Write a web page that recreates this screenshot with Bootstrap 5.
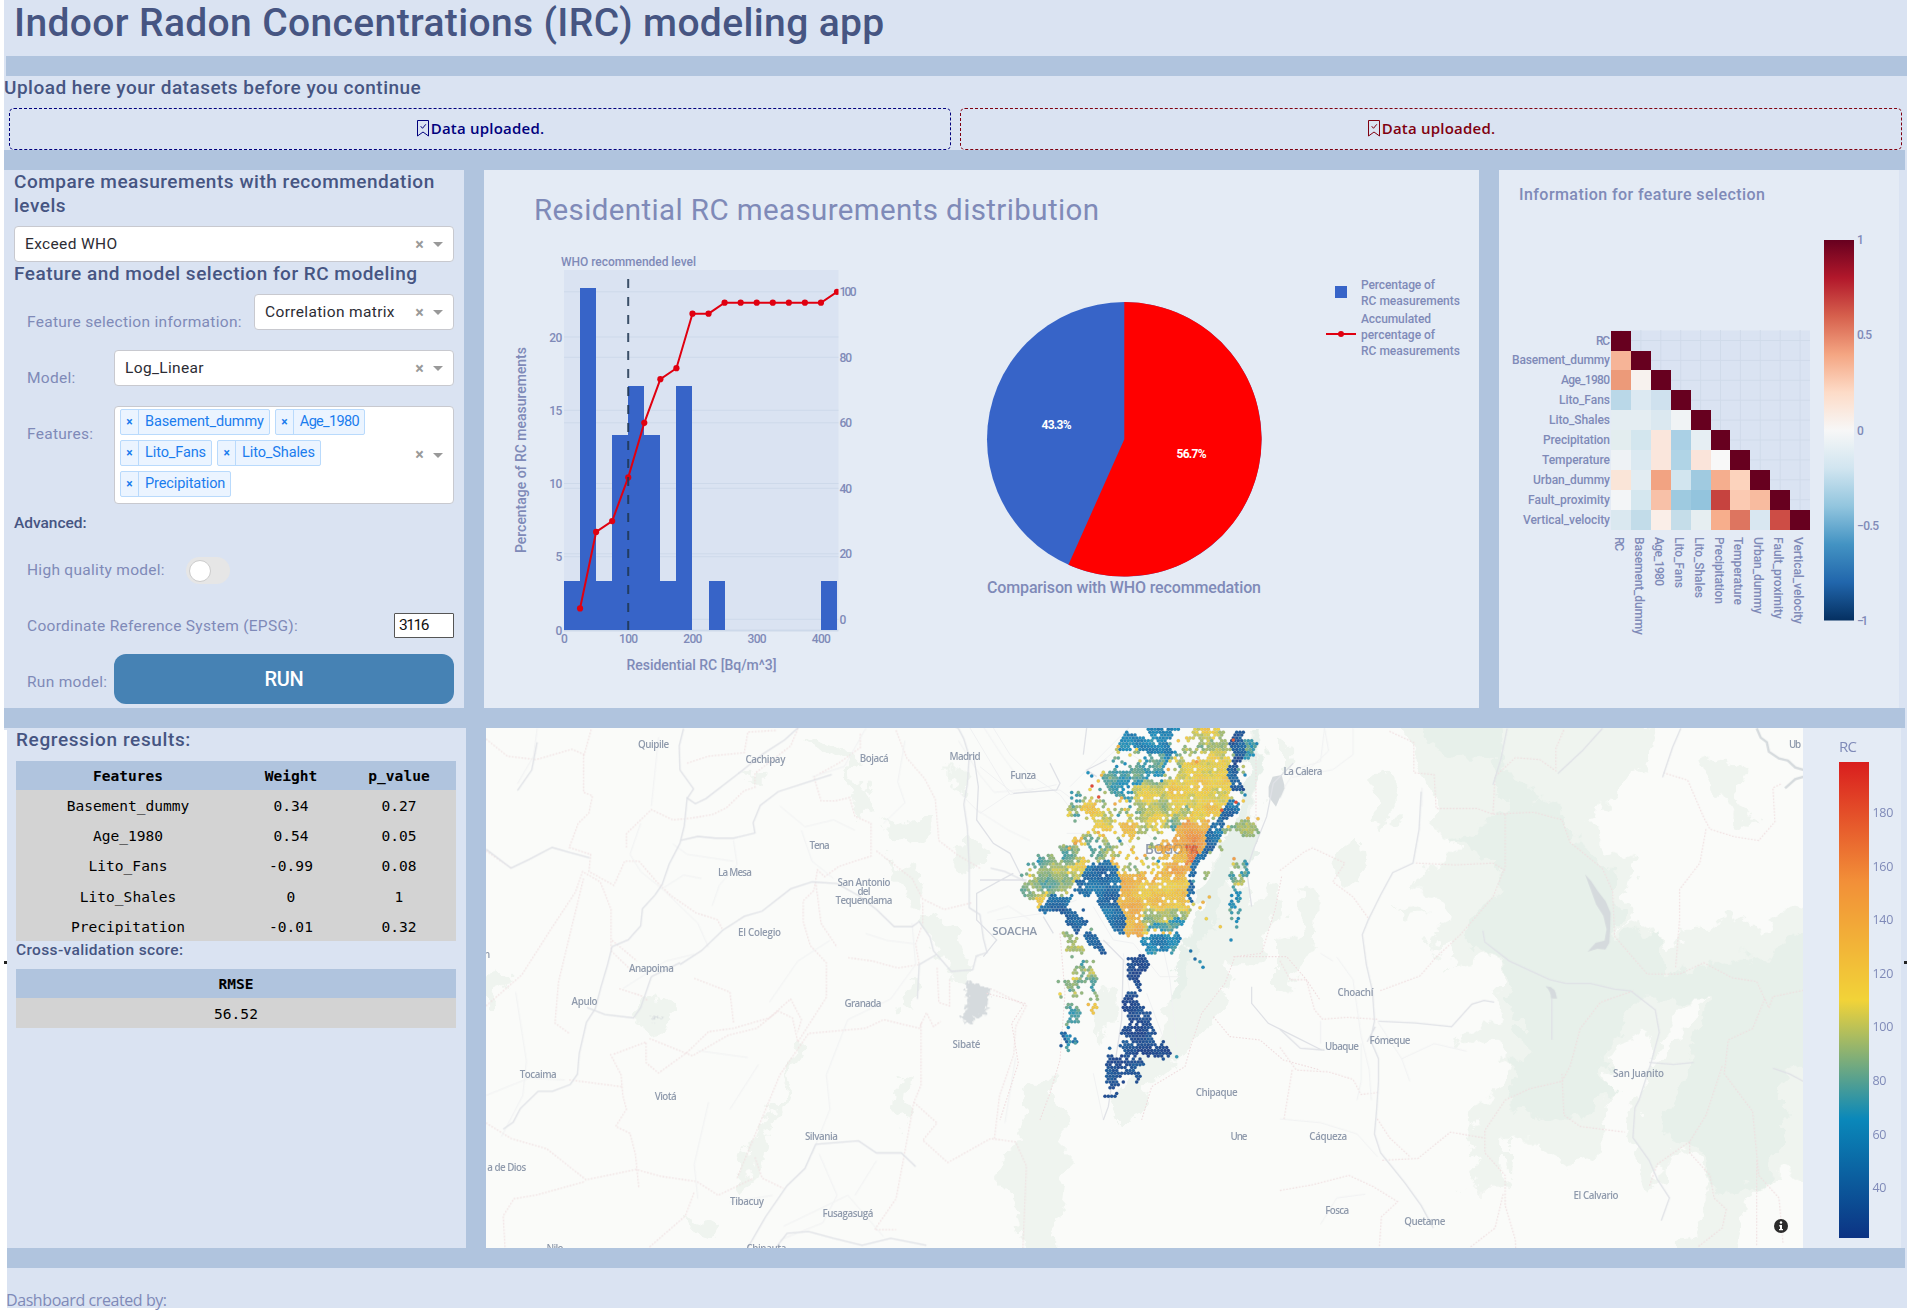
<!DOCTYPE html>
<html lang="en">
<head>
<meta charset="utf-8">
<title>Indoor Radon Concentrations (IRC) modeling app</title>
<link rel="stylesheet" href="https://cdn.jsdelivr.net/npm/bootstrap@5.3.0/dist/css/bootstrap.min.css">
<style>
:root{--panel:#dae3f2;--chart:#e4ebf5;--steel:#b0c4de;--ink:#465582;--soft:#7f8ab8}
body{background:#fff;font-family:Roboto,"Liberation Sans",sans-serif;color:var(--soft);width:1916px;height:1310px;overflow:hidden}
.shell{width:1903px;margin-left:4px;background:var(--panel);position:relative}
.band{background:var(--steel);height:20px}
.band.upper{width:1901px}
.band.lower{width:1901px}
.band.last{width:1898px;margin-left:3px}
.ttl{height:56px;padding:0 0 0 10px;font-size:39px;line-height:46px;font-weight:500;letter-spacing:.36px;color:var(--ink);white-space:nowrap;margin:0}
h2,h3{color:var(--ink);font-weight:500;margin:0;white-space:nowrap}
h2{font-size:19px;line-height:24px;letter-spacing:.53px}
h3{font-size:15.5px;letter-spacing:.35px}
.upload{height:74px}
.upload h2{height:32px;letter-spacing:.48px}
.zones{padding:0 5px 0 5px;gap:9px}
.drop{height:42px;border:1.5px dashed #00007d;border-radius:5px;color:#00007d;font:600 15px/38px "Open Sans",sans-serif;letter-spacing:.22px;flex:1;padding-bottom:2px}
.drop.red{border-color:#800010;color:#800010}
.split{width:20px;background:var(--steel)}
.upperrow{height:538px}
.lowerrow{height:520px;margin-left:3px}
.ctrl{width:460px;padding:0 10px 0 10px;background:var(--panel)}
.mid{width:995px;background:var(--chart)}
.side{width:400px;background:var(--chart)}
.dd{height:36px;background:#fff;border:1px solid #c8c9cf;border-radius:4px;color:#2c2c34;font-size:15.5px;letter-spacing:.35px;padding:1px 10px 0 10px;white-space:nowrap}
.dd.w200{width:200px}.dd.w340{width:340px}
.dd.multi{height:98px;padding-left:5px;padding-top:0}
.tags{gap:5px;padding-top:2px;width:270px}
.cl{color:#999;font-size:16px;font-weight:700;margin-right:9px;line-height:1}
.caret{border:5.500px solid transparent;border-top-color:#999;border-bottom:0;width:0;height:0}
.line56{height:56px}.line106{height:106px}.line41{height:41px}
.lab{font-size:15.5px;line-height:20px;letter-spacing:.29px;white-space:nowrap;padding:18px 0 0 13px}
.lab.hq{padding-top:3px;width:172px}
.lab.crs{padding-top:3px}
.tagx{height:26px;border:1px solid #b9dafc;background:#ebf4ff;color:#1a7cee;border-radius:2px;font-size:14.5px;line-height:24px;letter-spacing:-.1px}
.tagx i{font-style:normal;font-weight:700;width:18px;text-align:center;border-right:1px solid #b9dafc;font-size:12px}
.tagx span{padding:0 5px 0 6px}
.tagx .tight{letter-spacing:-.68px}
.sw{width:44px;height:27px;border-radius:14px;background:#e6e6e6;padding:2.5px}
.sw b{display:block;width:22px;height:22px;border-radius:50%;background:#fff;border:1px solid #ccc}
.epsg{width:60px;height:25px;border:1px solid #555;border-radius:1px;background:#fff;color:#111;font-size:15.5px;letter-spacing:-1.5px;line-height:22px;padding-left:4px}
.run,.run:hover{width:340px;height:50px;border-radius:12px;background:#4682b4;color:#fff;font-size:20px;font-weight:500;padding:0;border:0;line-height:48px;letter-spacing:-.3px}
.h-cmp{height:56px}.h-feat{height:32px}.h-feat.h-feat{letter-spacing:.49px}.h-adv.h-adv{height:45px;line-height:22px;letter-spacing:-.02px}
.res{width:459px;padding:0 10px 0 9px}
.res h2{height:33px;line-height:23px;letter-spacing:.62px}
.res h3{height:28px;line-height:18px}
.grid{font:14.55px/28px "DejaVu Sans Mono",monospace;color:#000;background:#d3d3d3;width:440px;text-align:center;table-layout:fixed}
.grid th{background:var(--steel);height:29px;padding:1px 0 0;font-weight:700;line-height:28px}
.grid td{height:30.2px;padding:2px 0 0}
.c1{width:224px}.c2{width:102px}
.foot{height:40px;font:16px/24px "Open Sans",sans-serif;padding:20px 0 0 2px;letter-spacing:-.42px;white-space:nowrap}
svg{display:block}
svg text{fill:var(--soft);font-family:Roboto,sans-serif;font-size:12.5px;font-weight:500}
.legend{background:var(--chart)}
.mapl text{font:600 9.8px "Open Sans",sans-serif;fill:#8f9aac;text-anchor:middle}
.bd{fill:none;stroke:#efdcde;stroke-width:1.1;stroke-dasharray:1.6 1.6}
.rd{fill:none;stroke:#dfe1e6;stroke-width:1.3}
.rm{fill:none;stroke:#f0f1f2;stroke-width:1}
.bd path,.rd path,.rm path{vector-effect:non-scaling-stroke}
.gn{fill:#eff4ef}.gd{fill:#e7f0ea}.wt{fill:#d5dadd}
.nub{position:absolute;width:3px;height:3px;background:#222;top:961px}
.edge{position:absolute;left:0;width:3px;background:#fff}
.edge.a{top:730px;height:231px}.edge.b{top:964px;height:344px}
</style>
</head>
<body>
<div class="shell">
  <h1 class="ttl">Indoor Radon Concentrations (IRC) modeling app</h1>
  <div class="band upper ms-auto"></div>
  <section class="upload d-flex flex-column">
    <h2>Upload here your datasets before you continue</h2>
    <div class="zones d-flex">
      <div class="drop d-flex justify-content-center align-items-center"><svg width="15" height="18" viewBox="0 0 15 18" fill="none" stroke="currentColor"><path d="M1.500 1.500h11v15.500l-5.500-4L1.500 17zM4.700 7.200l1.800 2.100 3.300-4"/></svg><span>Data uploaded.</span></div>
      <div class="drop red d-flex justify-content-center align-items-center"><svg width="15" height="18" viewBox="0 0 15 18" fill="none" stroke="currentColor"><path d="M1.500 1.500h11v15.500l-5.500-4L1.500 17zM4.700 7.200l1.800 2.100 3.300-4"/></svg><span>Data uploaded.</span></div>
    </div>
  </section>
  <div class="band upper"></div>

  <div class="upperrow d-flex">
    <aside class="ctrl d-flex flex-column">
      <h2 class="h-cmp">Compare measurements with recommendation<br>levels</h2>
      <div class="dd d-flex align-items-center"><span class="me-auto">Exceed WHO</span><span class="cl">×</span><span class="caret"></span></div>
      <h2 class="h-feat">Feature and model selection for RC modeling</h2>
      <div class="line56 d-flex justify-content-between"><span class="lab">Feature selection information:</span><div class="dd w200 d-flex align-items-center"><span class="me-auto">Correlation matrix</span><span class="cl">×</span><span class="caret"></span></div></div>
      <div class="line56 d-flex justify-content-between"><span class="lab">Model:</span><div class="dd w340 d-flex align-items-center"><span class="me-auto">Log_Linear</span><span class="cl">×</span><span class="caret"></span></div></div>
      <div class="line106 d-flex justify-content-between"><span class="lab">Features:</span>
        <div class="dd w340 multi d-flex align-items-center">
          <div class="tags d-flex flex-wrap me-auto align-self-start">
            <div class="tagx d-flex"><i>×</i><span>Basement_dummy</span></div><div class="tagx d-flex"><i>×</i><span class="tight">Age_1980</span></div>
            <div class="tagx d-flex"><i>×</i><span>Lito_Fans</span></div><div class="tagx d-flex"><i>×</i><span>Lito_Shales</span></div>
            <div class="tagx d-flex"><i>×</i><span>Precipitation</span></div>
          </div>
          <span class="cl">×</span><span class="caret"></span>
        </div></div>
      <h3 class="h-adv">Advanced:</h3>
      <div class="line56 d-flex"><span class="lab hq">High quality model:</span><div class="sw"><b></b></div></div>
      <div class="line41 d-flex justify-content-between"><span class="lab crs">Coordinate Reference System (EPSG):</span><div class="epsg">3116</div></div>
      <div class="d-flex justify-content-between"><span class="lab">Run model:</span><button class="btn run">RUN</button></div>
    </aside>
    <div class="split"></div>
    <section class="mid"><svg id="dist" width="995" height="538" viewBox="484 170 995 538"></svg></section>
    <div class="split"></div>
    <section class="side"><svg id="corr" width="400" height="538" viewBox="1499 170 400 538"></svg></section>
  </div>
  <div class="band lower"></div>

  <div class="lowerrow d-flex">
    <section class="res">
      <h2>Regression results:</h2>
      <table class="grid"><colgroup><col class="c1"><col class="c2"><col></colgroup>
        <tr><th>Features</th><th>Weight</th><th>p_value</th></tr>
        <tr><td>Basement_dummy</td><td>0.34</td><td>0.27</td></tr>
        <tr><td>Age_1980</td><td>0.54</td><td>0.05</td></tr>
        <tr><td>Lito_Fans</td><td>-0.99</td><td>0.08</td></tr>
        <tr><td>Lito_Shales</td><td>0</td><td>1</td></tr>
        <tr><td>Precipitation</td><td>-0.01</td><td>0.32</td></tr></table>
      <h3>Cross-validation score:</h3>
      <table class="grid"><tr><th>RMSE</th></tr><tr><td>56.52</td></tr></table>
    </section>
    <div class="split"></div>
    <svg id="map" width="1317" height="520" viewBox="0 0 1317 520">
      <filter id="rough" x="-5%" y="-5%" width="110%" height="110%"><feTurbulence type="fractalNoise" baseFrequency=".045" numOctaves="4" seed="5"/><feDisplacementMap in="SourceGraphic" scale="34" xChannelSelector="R" yChannelSelector="G"/></filter>
      <filter id="wiggle" x="-5%" y="-5%" width="110%" height="110%"><feTurbulence type="fractalNoise" baseFrequency=".09" numOctaves="3" seed="9"/><feDisplacementMap in="SourceGraphic" scale="28" xChannelSelector="R" yChannelSelector="G"/></filter>
      <rect width="1317" height="520" fill="#fafbf9"/>
      <!-- vegetation, three sheets -->
      <g filter="url(#rough)">
        <g transform="translate(-6,-8) scale(.3571,.3444)" class="gn"><path d="M905 50l60-5 50 40 30 30 10 60 40 60 10 30-40 5-20-80-20-60-60-40zM1120 280l50 30 40-10 60-40 0 60-30 30-60 10-40-40zM1320 140l50 5 10 40-30 25-30-20zM1330 360l60-10 15 70-20 25-60-15zM1140 400l60 20 40 80-10 40-50-20zM1240 560l60 20 50 30 30 80-10 50-60-5-60-90zM17 750l30-20 35 35-30 50-35 15zM480 800l55 30-10 60-50 10-60-30zM740 155l60-5-10 35-50 0zM1190 770l35 20-15 55-30-10zM1180 1035l35-10-10 90-15 60-30-10zM895 940l10 30-50 90-40 120-50 130-45 70-10-40 100-200zM570 1435l70 25 35 20-15 30-40-10z"/><path d="M1535 1080l45 10 60 80 0 150-30 230-90 10-20-160-60-60 40-90 30-40z"/></g>
        <g transform="translate(474,-8) scale(.3333)"><g class="gn"><path d="M855 24L900 24L905 150L900 290L840 350L800 470L880 560L940 500L960 560L935 640L900 710L820 720L795 800L780 870L720 920L660 1010L600 1060L560 1110L530 1200L460 1200L500 1060L600 960L650 740L700 600L760 400L840 300L870 180zM200 1130L290 1040L285 1110L250 1200L180 1200zM410 800L470 820L460 930L420 960zM0 140L30 160L10 240L0 240zM0 340L30 340L50 430L0 450z"/></g><path class="gd" d="M870 24L895 24L905 204L875 294L885 400L800 480L770 590L760 640L690 720L680 850L620 860L650 740L690 640L730 500L800 350L860 200z"/></g>
        <g transform="translate(794,-8) scale(.4057,.3763)">
        <path class="gn" d="M270 -30L330 90L340 140L380 240L370 300L440 320L430 370L340 400L330 450L400 470L420 520L370 570L380 620L430 590L410 680L500 620L540 660L545 780L520 800L440 830L450 870L540 860L560 920L540 980L490 1030L470 1110L500 1190L450 1250L555 1250L560 1130L620 1120L680 1180L800 1160L790 1040L820 980L800 900L900 820L930 880L1000 760L1080 690L1040 760L960 880L900 960L860 1100L900 1250L1000 1140L1060 1230L980 1430L1130 1430L1160 1260L1230 1200L1340 1250L1340 450L1190 560L1120 510L1060 560L990 560L960 630L900 540L840 560L880 370L810 330L760 280L790 230L900 130L915 60L890 -30zM230 210L250 130L290 160L290 250L260 300L225 280zM1040 110L1110 90L1150 140L1130 220L1180 280L1130 270L1060 180zM150 330L190 320L200 440L150 430L130 390zM50 450L90 440L90 540L100 600L60 640L30 720L0 720L0 590L60 570zM280 500L330 490L370 520L300 530zM0 50L15 50L25 120L0 145z"/>
        <path class="gd" d="M340 -30L550 -30L540 110L620 190L700 250L700 300L790 380L825 440L830 580L920 550L930 620L960 680L1100 640L1230 610L1340 530L1340 920L1240 940L1250 1120L1180 1240L1080 1260L1010 1120L940 1090L1010 900L1060 740L950 740L880 740L830 850L780 900L820 970L750 1050L700 1060L560 1020L580 950L560 900L610 870L570 740L540 650L470 590L480 510L550 420L550 380L430 320L500 270L560 230L540 120L400 100z"/>
        </g>
      </g>
      <!-- western roads, rivers and limits -->
      <g transform="translate(-6,-8) scale(.3571,.3444)">
        <g class="wt" filter="url(#wiggle)"><path d="M1360 755l70 25-15 75-30 10-5 15-35-5 20-50zM480 862l40 0 0 5-35 3-5 10z"/></g>
        <g class="bd"><path d="M17 55l60 50 80 10 100-30 35 15 20-75M290 100v110l25 10-10 50-30 30-25 70 60 20-5 50 70 40 30-70 40 0 50 60 40 40 70 50 60 20 15 30M410 370l0-40 30-30 40-40 60 30 50-5 60-10 40-20 50-50 30-10 0-40 100-80 20-50M580 125l60-20 100-10 10-60 80-5M1065 40l0 40-60 45-70 40 20 70 40 0 40-10 15 55 45 20 0 95-90 30-40 30-20-20-10 60-30 30 0 60 20 70 45 50 0 100-80 130-15-70-40-20-60 50-80 20-100 60-120-50M1165 30l30 80 50 60 30 60 10 120 50 40 65 40M1110 380l100 80 30 60 60 30 80-20M1240 530l0 60-20 60 10 60-60 10-70-20-70-10M940 470l15 120 45 70M17 380l70 50M17 830l100-90 80-130 70-110 20-60 50 30 30 80 0 120 60 60M290 460l-40 170-30 130-10 120 40 30M370 640l70 60M390 780l60 20 20 15M600 750l100 40 10 90M375 970l90-35 0 60 35 30 80-60 60-60 70-10 100-30 60-55 30 60-10 35M365 970l30 60 5 60 10 40-30 50 40 20 15 60 10 100M17 1170l70 45 100 30 110 90 140-30 70 20 100 15 60 40 100-50M250 1045l150 20M70 1530l-5-90 30-50 60-10 140-40M475 1530l100-90 25-70M720 1330l120-300 80-120 160-15 50-25 100 25 20-45 20 40 20-15M1235 880l0 180-20 50-30 170-20 110-60 90 60 0M1215 1110l65 60-40 50 70 65 120-70 70 10 30 70-10 250M1280 720l5 100 30 10 0-80M1430 780l100 50-30 60-5 80-40 120-15 130M770 1270l20 60 60 30"/></g>
        <g class="rm"><path d="M160 25l-10 80-45 80M450 300l-30 90 30 50 60 50 60-40 50 10M540 360l40 30 130 20M710 350l10 70-50 60-20 60M900 320l30 90 60 50M840 250l70 60 80-20 60 30M400 780l120-80 80-20M980 640l-90 60-80 120M1080 25l-60 110-90 30M1190 60l-20 120 20 60-60 60M1340 60l60 100 40 50 110-10M1390 260l90 60 60 30M1410 20l50 80 70 100M1080 620l60 20 80 10M1210 590l10 120-70 100-120 60-60 160 10 100-50 130M610 960l140 20M780 1000l-80 130M640 1110l-40 180 10 100M510 490l100 100 30 70M100 790l30 200-10 100-60 120M17 1090l120-50 100 5M700 1400l120-20M950 1260l50 120-40 80-120 50M1050 1380l60-100M850 1470l180-90 100 120M1500 980l-30 190M1420 560l60-20 60 40M480 250l20-200"/></g>
        <g class="rd"><path d="M570 25l-12 50 2 70 38 55-18 28-8 80-12 50-30 60-20 60-20 30-35 40-5 50-35 40-45 20-12 50-20 70-15 60-25 40-20 90-5 60-20 30-50 20-40 0-50 50-20 40-28 20M578 225l25 18 30-15 100-80 60-50 60-40 80-75M560 350l50-12 50 5 50 0 60-15-5-30 20-50 50-40 90-30 60-20M17 375l70 55 50-25 65-35 50 15 55 15M560 710l60-40 60-60 60-40 50-15 80-65 60-20 70 5 60 35 50 40 50 50 50 0 20-15 30 45 10 40 50 60 60-5 10-40 30-10-10-40-10-70-30-20 0-120-5-110-10-70 10-60 5-80-15-50-15-30-50-30M300 835l50 20 80 10 20-30 30-90 80-40M750 1532l50-90 60-90 50-50 30-70 120-10 50 35 70 0 40 40M830 1530l30-40 60-5 70 20 80 20 80-20 100 20M1280 680l-50 30-5 100M1430 430l40 10 60 30M105 205l40-60 15-80"/></g>
      </g>
      <!-- eastern highlands -->
      <g transform="translate(794,-8) scale(.4057,.3763)">
        <g class="wt"><path d="M752 410l15 18 16 26 20 28 12 30-1 40-2 40-10 18-20-2-24 8 20-24 22-6 5-30-8-36-18-30-12-36zM655 708q24-2 28 32l-15 0q0-20-13-32zM0 150l12 30-12 30z"/></g>
        <g class="bd"><path d="M270 30l60 30 0 80 50 5 5 90 100 0 40 15 100-5 70 20 20 60 80 70 25 60 5 120 40 50 40 50 80 0 60-30 70 40 60 10 30 70 10-30 90-20M555 250v140l-30 80-80 100-60 60-40 50-100 40M335 380l100 5 90-5 30 20M525 250l5-100 50-50 60 5 40 30 0-60 20-50M0 400l60-50 20-10 80 40-30 50 50 40 40 60M0 640l25 50 40 0 20 80 20 25 60-5 75 5M945 140l60 20 40 100 15 30 60 20 60 10 40-50-5-90 20-10M1050 290l-15 90-50 70 0 80-10 130M870 720l-80 30-50 70-25 100-20 40-80 20-60 30-50 80 0 60 50 60 0 80 25 90 5 110M695 940l5 110 40 30 110 15M1195 740l-30 80-60 30-10 90 70 100 15 170 50 60 10 120M1090 920l-40 130-40 70 0 30 50 60 10 60 30 30-10 50-60 50M1010 1120l-80 60-20 60M500 1110l-80-15-80 70-90 5M0 870l40 60 80 5 60 20 20 40 40-5M0 1250l80-15 90-25 60 30 60 40-40 40-5 80M550 1260l-20 90-60 50M240 1060l30 50 50 50M10 1060l20-130M1175 1170l0 230"/></g>
        <g class="rm"><path d="M110 22l10 60-60 60M180 22l0 70-50 40-100 20M350 180l0 50M140 630l40 60 20 150 20 90 5 80M0 1060l100 10 90 30 50 60M200 860l0 100-10 50M130 640l-30-20M240 800l60 100 20 60M300 900l80-40 80 20M10 180l30-50 60-20 10-90M100 1340l40-70 70-10M100 800l0 60"/></g>
        <g class="rd"><path d="M348 190l-5 100-15 90-50 25-30 60-30 65-15 40 10 80 15 70 5 80-10 50 20 50 0 60-5 80-5 60 15 50 60 80 40 60 30 60M243 800l90 5 90 10 50-60 30-10 25 5M500 560l5 30 60 50 40 20 60 30 40 10 60 0 60 15 40 5 60 50 10 60-10 40-10 40-30 100-10 20-5 80 40 60 20 50 30 50-20 60M910 910l60 5 50-5M560 22l-15 80-20 70M795 22l-50 60-60 60M988 22l-20 50-25 80M0 822l50 50 60 5M215 855l20-40M1215 925l40 15 35 20M670 740l0 110"/></g>
        <path d="M1175 22l10 25 15 12 5 25 25 18 22 6 18 18 25 8v15l-25 8-25 24" fill="none" stroke="#d5dadd" stroke-width="6"/>
      </g>
      <!-- Bogotá and surroundings -->
      <g transform="translate(474,-8) scale(.3333)">
        <g class="wt"><path d="M965 165l8 30-8 25-17 40-22-30 0-30 12-30z"/></g>
        <g class="bd"><path d="M888 100l0 190 0 50M965 470l-20 100-40 130-80 10-30 80-70 90-30 90-20 70-100 60-30 100M820 710l160 0 60 70 40 60M760 890l50 60 90 10 70 60 110 30M300 640l15 180-15 200-30 100-30 80M80 820l115 30-40 60 20 120-55 170"/></g>
        <g class="rm"><path d="M30 24l60 100 60 100 140-30M100 24l50 80 60 60 90 60 60 80M300 210l80 60 60 30 60 70 40 50M60 140l100 80 140-10M0 220l60 60 90-60M330 200l60-60 60-60 60-60M540 120l-60-40-60 50M400 560l60 100 60 10 80 100 60 0M490 700l20 120M600 560l60 100M320 340l60 0M560 340l80 80-60 80M600 640l30 140 20 200M400 1060l30 140M110 600l140-20 100-40M350 640l100 30M560 820l60 160"/></g>
        <g class="rd"><path d="M40 100l15 100-5 100 50 70 50 30 40 80M60 480l40 0 100 0M160 220l130-10 10-20-30-60M380 24l-10 80M410 170l-30-20 60-30M160 460l-110 60 0 80 60 60-40 50M430 660l60 60-5 180-40 260-15 40M1000 130l-60 60-20 100-40 100-20 60 15 110M875 800l0 50 50 60 80 40 80 40M250 590l30 50"/></g>
      </g>
      <g class="mapl" id="labels"></g>
      <g id="dots"></g>
      <circle cx="1295" cy="498" r="7" fill="#2b2b2b"/><path d="M1293.300 497h2.700v4h1v1.200h-4v-1.200h1v-2.600h-.700z" fill="#fff"/><circle cx="1295" cy="494.500" r="1.200" fill="#fff"/>
    </svg>
    <svg class="legend" width="98" height="520" viewBox="1803 728 98 520">
      <defs><linearGradient id="pt" x1="0" y1="1" x2="0" y2="0"><stop offset="0" stop-color="#0c3383"/><stop offset=".25" stop-color="#0a88ba"/><stop offset=".5" stop-color="#f2d338"/><stop offset=".75" stop-color="#f28f38"/><stop offset="1" stop-color="#d91e1e"/></linearGradient></defs>
      <rect x="1839" y="762" width="30" height="476" fill="url(#pt)"/><g id="pticks"></g>
    </svg>
  </div>
  <div class="band last"></div>
  <footer class="foot">Dashboard created by:</footer>
  <span class="nub start-0"></span><span class="nub end-0"></span>
  <div class="edge a"></div><div class="edge b"></div>
</div>
<script src="https://cdn.jsdelivr.net/npm/bootstrap@5.3.0/dist/js/bootstrap.bundle.min.js"></script>
<script>
// text helper: width w fixes the advance of the label
const T=(x,y,s,w,o='')=>`<text x="${x}" y="${y}" ${w?`textLength="${w}"`:''} ${o}>${s}</text>`;

// histogram, cumulative curve and pie
(()=>{
 let h=T(534,219.5,'Residential RC measurements distribution',565,'style="font-size:29.5px;font-weight:400"')+T(561,266,'WHO recommended level',135,'style="font-size:12px"');
 h+='<rect x="564" y="270" width="274.500" height="360" fill="#dae3f2"/>';
 const L=v=>630-14.65*v,R=v=>619.3-3.275*v;
 [5,10,15,20].forEach(v=>h+=`<path d="M564 ${L(v)}h274.500" stroke="#cdd9ea"/>`);
 [0,20,40,60,80,100].forEach(v=>h+=`<path d="M564 ${R(v)}h274.500" stroke="#cdd9ea"/>`);
 h+='<path d="M564 630.500h274.500" stroke="#cdd9ea" stroke-width="2"/>';
 [3.333,23.333,3.333,13.333,16.667,13.333,3.333,16.667,0,3.333,0,0,0,0,0,0,3.333].forEach((v,i)=>{if(v)h+=`<rect x="${Math.round(564+16.06*i)}" y="${Math.round(L(v))}" width="${Math.round(580.06+16.06*i)-Math.round(564+16.06*i)}" height="${630-Math.round(L(v))}" fill="#3764c8"/>`});
 const c=[3.33,26.67,30,43.33,60,73.33,76.67,93.33,93.33,96.67,96.67,96.67,96.67,96.67,96.67,96.67,100].map((v,i)=>[580.06+16.06*i,R(v)]);
 h+=`<clipPath id="pc"><rect x="564" y="270" width="274.500" height="361"/></clipPath><g clip-path="url(#pc)"><path d="M${c.join('L')}" fill="none" stroke="#e00010" stroke-width="2"/>`+c.map(p=>`<circle cx="${p[0]}" cy="${p[1]}" r="3.100" fill="#e00010"/>`).join('')+'</g>';
 h+='<path d="M628.200 630V279" stroke="#1f3550" stroke-opacity=".85" stroke-width="2" stroke-dasharray="9 9"/>';
 [0,5,10,15,20].forEach(v=>h+=T(562,L(v)+4.5,v,0,'style="text-anchor:end;font-size:12px;letter-spacing:-.4px"'));
 [0,20,40,60,80,100].forEach(v=>h+=T(839.5,R(v)+4.5,v,[0,12.5,17][String(v).length-1],'style="font-size:12px"'));
 [0,100,200,300,400].forEach(v=>h+=T(564+.6425*v,643,v,0,'style="text-anchor:middle;font-size:12px;letter-spacing:-.6px"'));
 h+=T(626.5,670,'Residential RC [Bq/m^3]',150,'style="font-size:14px"')+`<g transform="translate(525.500,553) rotate(-90)">${T(0,0,'Percentage of RC measurements',206,'style="font-size:14px"')}</g>`;
 const cx=1124.3,cy=439.3,r=137.3,a=2*Math.PI*.5667,ex=cx+r*Math.sin(a),ey=cy-r*Math.cos(a);
 h+=`<circle cx="${cx}" cy="${cy}" r="${r}" fill="#3764c8"/><path d="M${cx} ${cy}V${cy-r}A${r} ${r} 0 1 1 ${ex} ${ey}z" fill="#f00"/>`;
 h+=T(1041.5,429,'43.3%',30,'style="fill:#fff;font-weight:700;font-size:12px"')+T(1176.5,458,'56.7%',30,'style="fill:#fff;font-weight:700;font-size:12px"');
 h+=T(987,593,'Comparison with WHO recommedation',274,'style="font-size:16px"');
 h+='<rect x="1335" y="286" width="12" height="12" fill="#3764c8"/><path d="M1326 334h30" stroke="#e00010" stroke-width="2"/><circle cx="1341" cy="334" r="3" fill="#e00010"/>';
 const s='style="font-size:12px"';
 h+=T(1361,289,'Percentage of',74,s)+T(1361,305,'RC measurements',99,s)+T(1361,323,'Accumulated',70,s)+T(1361,339,'percentage of',74,s)+T(1361,355,'RC measurements',99,s);
 dist.innerHTML=h;
})();

// correlation matrix
(()=>{
 const n=['RC','Basement_dummy','Age_1980','Lito_Fans','Lito_Shales','Precipitation','Temperature','Urban_dummy','Fault_proximity','Vertical_velocity'],
 w=[14,98,49,51,61,67,68,77,82,87],
 m=['','#f6b497','#ec9a79 #f7f2ee','#bad8e8 #dce9f2 #cfe1ee','#e4edf2 #e4edf2 #dbe8f0 #f0f3f5','#e3edef #d3e6ee #fae6dc #aad0e5 #e6eef3','#eef2f5 #dbe9f1 #fae6dc #b0d4e6 #fae4da #f8f8f8','#fae5d8 #e2ecf2 #f2a382 #d2e5ef #a0cae0 #f5ae8e #fcd3bd','#f3f5f7 #d5e7ef #f8c1a8 #9ecae0 #93c4dd #c6433f #fbcab2 #f8bb9f','#dae8f0 #c2dce9 #faeee8 #c5dde9 #e6eef1 #f7ae8c #dd7560 #d9e7f1 #cd4d45'];
 let h=T(1519,200,'Information for feature selection',246,'style="font-size:16px"')+'<rect x="1611" y="330.500" width="199" height="199" fill="#dae3f2"/>';
 for(let i=0;i<10;i++)h+=`<path d="M${1621+19.9*i} 330v199M1611 ${340.5+19.9*i}h199" stroke="#d0dbea"/>`;
 for(let r=0;r<10;r++){const c=(m[r]?m[r].split(' '):[]).concat('#67001f');c.forEach((f,k)=>{const x=Math.round(1611+19.9*k),y=Math.round(330.6+19.9*r);h+=`<rect x="${x}" y="${y}" width="${Math.round(1630.9+19.9*k)-x}" height="${Math.round(350.5+19.9*r)-y}" fill="${f}"/>`});
  h+=T(1610-w[r],344.5+19.9*r,n[r],w[r],'style="font-size:12px"');
  h+=`<g transform="translate(${1615+19.9*r},537) rotate(90)">${T(0,0,n[r],w[r],'style="font-size:12px"')}</g>`}
 const s=['#67001f','#b2182b','#d6604d','#f4a582','#fddbc7','#f7f7f7','#d1e5f0','#92c5de','#4393c3','#2166ac','#053061'];
 h+='<linearGradient id="rb" x1="0" y1="0" x2="0" y2="1">'+s.map((c,i)=>`<stop offset="${i/10}" stop-color="${c}"/>`).join('')+'</linearGradient><rect x="1824" y="240" width="30" height="380.500" fill="url(#rb)"/>';
 [['1',244,0],['0.5',339,15],['0',434.5,0],['−0.5',530,22],['−1',625,11]].forEach(t=>h+=T(1857,t[1],t[0],t[2],'style="font-size:12px"'));
 corr.innerHTML=h;
})();

// place names on the map: name, x, y, width
labels.innerHTML=[['Quipile',167.6,16.8,31],['Cachipay',279.4,30.9,40],['Bojacá',388.3,29.9,29],['Madrid',479,28.2,31],['Funza',537.3,47.7,26],['Tena',333.6,117.7,20],['La Mesa',249,144.2,34],['San Antonio',378,154,53],['del',378,163.5,13],['Tequendama',378,172.6,57],['El Colegio',273.6,204,43],['Anapoima',165.4,240.6,45],['Apulo',98.6,273.7,26],['Granada',377,275,37],['Sibaté',480.4,316.7,28],['Tocaima',52.2,346,37],['Viotá',179.7,368,22],['Silvania',335.4,408.7,33],['a de Dios',20.8,439,39],['Tibacuy',261,473,34],['Fusagasugá',362,485.8,51],['Nilo',69,520.6,17],['Chinauta',280.4,520,40],['La Calera',817,43.6,39],['Choachí',869.5,264,36],['Ubaque',856,318,34],['Fómeque',904,312,41],['Cáqueza',842.3,408,38],['Fosca',851.2,482,24],['Quetame',938.8,493,41],['San Juanito',1152.6,345,51],['El Calvario',1110,467,45],['Chipaque',730.7,364.7,42],['Une',753,408.5,17],['Ub',1309,16,12],['C',1320,75,8],['n',1,226,6]].map(l=>T(l[1],l[2]+3.6,l[0],l[3])).join('')
 +T(528.7,206.7,'SOACHA',45,'style="font-size:11.500px;font-weight:600"')+T(686,125.5,'BOGOTÁ',54,'style="font-size:13.500px;font-weight:600"');

// measured cells: polygon, RC value, fill share, spread
(()=>{
 const Z=[
 ['480,60 720,60 870,60 840,300 700,460 700,560 640,640 500,640 480,460 390,430 330,370 390,330 330,310 330,220 420,180',104,.24,34],
 ['200,450 240,410 330,370 400,420 330,520 210,545',88,.3,20],
 ['500,35 480,60 470,95 520,85 600,115 590,165 615,175 630,100 635,60 660,24 560,24 570,55',58,.95,10],
 ['540,85 610,110 600,165 560,130',80,.65,14],
 ['490,120 420,180 450,222 490,230 510,265 520,200 560,190 620,180 600,120 560,130',73,.7,14],
 ['430,175 490,165 520,205 480,225',72,.92,10],
 ['520,200 560,185 620,180 640,200 620,260 640,330 570,325 540,345 525,300 540,270 520,240',102,.93,14],
 ['630,200 650,150 710,120 780,100 820,130 812,250 760,290 650,315 620,260',112,.94,12],
 ['670,255 700,260 695,290 640,335 620,310',88,.9,14],
 ['710,24 790,24 790,60 830,90 770,110 720,100 680,55',104,.75,18],
 ['740,55 780,60 820,90 780,110 745,90',92,.88,14],
 ['665,90 720,90 660,150 640,170',92,.4,18],
 ['822,24 855,40 850,70 880,95 838,130 828,180 858,215 812,205 800,170 820,110 812,70',35,.96,12],
 ['850,60 890,70 885,110 855,130',65,.65,18],
 ['818,235 832,245 832,275 800,310 778,355 748,395 697,470 686,465 722,380 745,335 775,280 805,255',45,.95,12],
 ['650,315 740,295 750,325 735,365 715,405 695,445 650,440 660,400 630,370',142,.95,14],
 ['680,375 712,380 705,420 680,430',170,.94,14],
 ['570,370 660,380 655,430 600,415',132,.6,14],
 ['575,430 660,420 690,450 680,500 570,500 590,460',128,.7,18],
 ['372,225 420,270 480,260 472,320 410,335 380,280',110,.87,14],
 ['480,305 530,310 525,355 485,355',120,.85,10],
 ['530,290 572,330 555,352 528,335',98,.85,10],
 ['330,210 400,230 360,270 355,300 325,305',85,.5,24],
 ['440,255 500,265 520,300 470,300',90,.45,24],
 ['380,335 470,365 480,400 420,430 390,400 370,350',88,.55,18],
 ['305,375 350,370 345,420 385,420 380,450 345,490 300,520 240,540 203,548 180,505 230,465 240,410 280,405 310,440',89,.92,12],
 ['322,440 385,415 375,450 338,500',108,.9,12],['215,535 270,515 240,565',110,.9,10],
 ['440,425 560,400 560,460 480,460',118,.42,28],
 ['240,572 270,525 340,530 345,480 370,450 400,430 440,425 478,450 482,560 505,610 495,642 450,625 430,580 400,525 350,520 300,578',45,.96,10],
 ['285,570 320,560 375,600 388,615 345,635 305,595',36,.82,8],['335,545 375,565 370,580',34,.5,8],
 ['385,638 412,640 435,690 425,715 390,675 370,645',38,.95,8],
 ['480,455 540,468 560,510 545,560 550,655 490,648 505,600 478,570',131,.95,12],
 ['540,490 690,480 693,575 560,600 545,560',119,.9,12],
 ['560,570 690,570 685,595 540,640',98,.9,12],['590,605 688,592 660,632 550,632',70,.9,14],
 ['540,650 655,638 658,665 640,697 560,697',62,.9,14],
 ['683,480 710,510 692,562 682,520',40,.97,6],
 ['305,638 345,645 378,685 365,698 325,695',97,.92,10],
 ['360,718 402,720 418,840 390,815 345,828 295,790 340,770',90,.68,18],
 ['372,850 410,853 400,890',125,.8,10],
 ['350,855 365,900 330,920 310,985 325,990 350,965 320,930',62,.55,24],
 ['303,930 326,930 318,962',35,.9,8],['325,855 358,850 358,908 315,915',80,.75,10],
 ['500,708 560,712 572,750 535,768 538,812 515,785 500,760',25,.92,6],
 ['490,822 538,820 545,855 575,880 585,930 570,955 600,975 612,955 635,1005 580,1022 545,990 510,960 486,945 505,900 488,860',26,.92,7],
 ['432,1015 480,1005 490,960 540,985 548,1022 510,1065 470,1107 425,1105 442,1060',28,.75,9],
 ['518,1060 555,1070 530,1097',28,.75,6],['435,1120 475,1120 475,1130 435,1130',28,.8,5],
 ['860,290 885,320 905,345 845,350 815,325',90,.92,10],['785,320 810,325 800,345',88,.7,6],
 ['732,452 750,460 725,488',90,.9,6],['770,370 795,385 780,402',95,.6,6],
 ['812,422 878,430 868,478 840,492 812,505',85,.66,24],['812,500 848,518 845,562 808,598 806,560',72,.58,16],['825,565 840,565 838,628 826,628',75,.7,24]
 ].map(z=>[z[0].split(' ').map(p=>p.split(',').map(Number)),z[1],z[2],z[3]]);
 const S=[[12,51,131],[10,136,186],[242,211,56],[242,143,56],[217,30,30]];
 const col=v=>{let t=Math.max(0,Math.min(.999,(v-21)/178))*4,i=t|0,f=t-i;return'rgb('+S[i].map((a,k)=>Math.round(a+(S[i+1][k]-a)*f))+')'};
 let q=7;const rnd=()=>{q=(q*1664525+1013904223)>>>0;return q/4294967296};
 const ins=(p,x,y)=>{let c=false;for(let i=0,j=p.length-1;i<p.length;j=i++)if((p[i][1]>y)!=(p[j][1]>y)&&x<(p[j][0]-p[i][0])*(y-p[i][1])/(p[j][1]-p[i][1])+p[i][0])c=!c;return c};
 let h='';const dot=(x,y,v)=>{h+=`<circle cx="${(474+x/3).toFixed(1)}" cy="${(y/3-8).toFixed(1)}" r="1.750" fill="${col(v)}"/>`};
 for(let r=0,y=28;y<1135;y+=8.6,r++)for(let x=175+(r%2)*5;x<910;x+=10){
  const a=rnd(),b=rnd(),wave=Math.sin(x/23+y/41)*Math.cos(y/19-x/37);
  const jx=x+Math.sin(y/13+x/29)*5,jy=y+Math.sin(x/11-y/31)*5;
  let z=null;for(const k of Z)if(ins(k[0],jx,jy))z=k;
  if(z){const s=z[2];if(a<s*(s<.9?1+.4*wave:1))dot(x,y,z[1]+(b-.5)*z[3]+wave*z[3]*.9)}
 }
 [[396,198,190],[416,231,185],[384,158,66],[395,168,60],[748,531,130],[729,547,135],[720,563,122],[739,596,112],[781,620,118],[813,660,62],[692,693,48],[705,717,45],[720,725,70],[729,742,60],[650,1010,70],[828,247,188],[785,271,180],[820,60,180],[894,296,128],[864,295,135],[822,416,150],[205,433,75],[185,466,80],[200,462,85],[336,710,85],[394,628,85],[300,822,110],[303,831,88],[449,985,40],[481,977,35],[303,977,34],[346,969,75],[550,1033,35],[710,125,150],[486,126,80],[346,370,145],[328,385,138],[311,377,95],[855,165,60],[855,225,60],[412,838,90],[392,838,88]].forEach(p=>dot(...p));
 dots.innerHTML=`<g opacity=".9" stroke="#345" stroke-opacity=".15" stroke-width=".5">${h}</g>`;
})();
pticks.innerHTML=T(1839,752,'RC',18,'style="font:15px Open Sans"')+[180,160,140,120,100,80,60,40].map((v,i)=>T(1872.5,817+53.6*i,v,0,'style="font:12.5px Open Sans;letter-spacing:-.3px"')).join('');
</script>
</body>
</html>
